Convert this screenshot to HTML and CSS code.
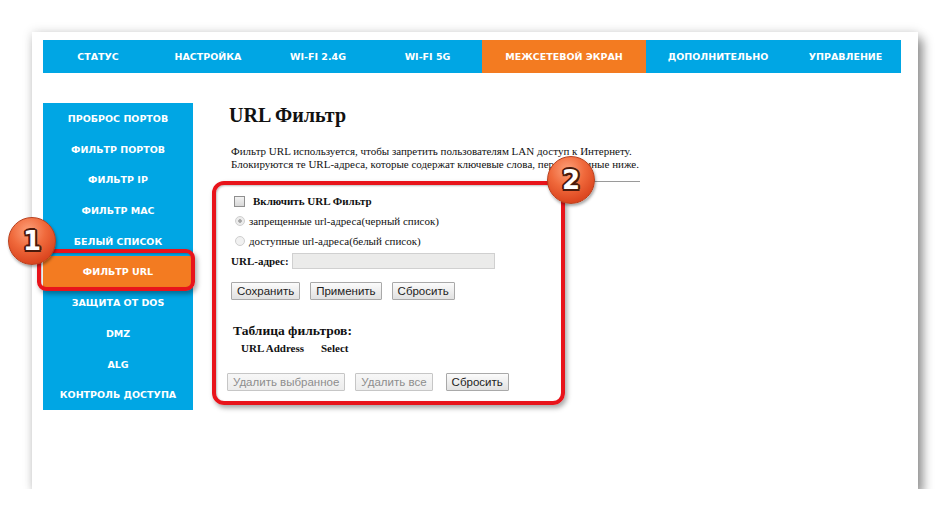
FILE: index.html
```html
<!DOCTYPE html>
<html lang="ru">
<head>
  <meta charset="UTF-8" />
  <title>URL Фильтр</title>
  <link rel="stylesheet" href="styles.css">
</head>
<body>
  <div class="page">
    <div class="panel">

      <nav class="topnav">
        <a href="#" class="tab-1">Статус</a>
        <a href="#" class="tab-2">Настройка</a>
        <a href="#" class="tab-3">Wi-Fi 2.4G</a>
        <a href="#" class="tab-4">Wi-Fi 5G</a>
        <a href="#" class="tab-5 active">Межсетевой экран</a>
        <a href="#" class="tab-6">Дополнительно</a>
        <a href="#" class="tab-7">Управление</a>
      </nav>

      <div class="main">
        <ul class="sidebar">
          <li><a href="#">Проброс портов</a></li>
          <li><a href="#">Фильтр портов</a></li>
          <li><a href="#">Фильтр IP</a></li>
          <li><a href="#">Фильтр MAC</a></li>
          <li><a href="#">Белый список</a></li>
          <li class="active">
            <a href="#">Фильтр URL</a>
            <!-- annotation -->
            <span class="mark"></span>
            <span class="badge badge-1">1</span>
          </li>
          <li><a href="#">Защита от DoS</a></li>
          <li><a href="#">DMZ</a></li>
          <li><a href="#">ALG</a></li>
          <li><a href="#">Контроль доступа</a></li>
        </ul>

        <section class="content">
          <h1>URL Фильтр</h1>
          <p class="intro">
            Фильтр URL используется, чтобы запретить пользователям LAN доступ к Интернету.<br>
            Блокируются те URL-адреса, которые содержат ключевые слова, перечисленные ниже.
          </p>
          <div class="rule"></div>

          <form class="filter-form">
            <span class="mark mark-form"></span>
            <span class="badge badge-2">2</span>

            <label class="row check-row">
              <input type="checkbox" class="box" />
              <b>Включить URL Фильтр</b>
            </label>
            <label class="row radio-row">
              <input type="radio" name="mode" class="dot" checked disabled />
              запрещенные url-адреса(черный список)
            </label>
            <label class="row radio-row">
              <input type="radio" name="mode" class="dot" disabled />
              доступные url-адреса(белый список)
            </label>
            <div class="row url-row">
              <b>URL-адрес:</b>
              <input type="text" class="url-input" disabled />
            </div>
            <div class="buttons">
              <button type="button">Сохранить</button>
              <button type="button">Применить</button>
              <button type="button">Сбросить</button>
            </div>

            <h3>Таблица фильтров:</h3>
            <table class="filters">
              <tr>
                <th class="col-url">URL Address</th>
                <th>Select</th>
              </tr>
            </table>

            <div class="buttons bottom">
              <button type="button" disabled>Удалить выбранное</button>
              <button type="button" disabled>Удалить все</button>
              <button type="button" class="reset">Сбросить</button>
            </div>
          </form>
        </section>
      </div>

    </div>
  </div>
</body>
</html>
```

FILE: styles.css
```css
/* Base */
body {
  margin: 0;
  background: #fff;
  font-family: 'Liberation Serif', 'Times New Roman', serif;
  color: #111;
}

.page {
  padding: 32px 0 0 32px;
}

.panel {
  width: 886px;
  height: 457px;
  box-sizing: border-box;
  padding: 8px 0 0 11px;
  background: #fff;
  box-shadow: 5px 7px 10px rgba(0, 0, 0, 0.4), 0 0 10px rgba(0, 0, 0, 0.15);
}

/* Top navigation */
.topnav {
  display: flex;
  width: 858px;
  height: 33px;
  background: #00a6e4;
}

.topnav a {
  display: block;
  text-align: center;
  line-height: 33px;
  color: #fff;
  text-decoration: none;
  text-transform: uppercase;
  font-family: 'DejaVu Sans', Verdana, sans-serif;
  font-weight: bold;
  font-size: 9.5px;
}

.topnav a.active {
  background: #f37b21;
}

.tab-1, .tab-2, .tab-3 { width: 110px; }
.tab-4 { width: 109px; }
.tab-5 { width: 164px; }
.tab-6 { width: 144px; }
.tab-7 { width: 111px; }

.main {
  display: flex;
  margin-top: 30px;
}

/* Sidebar */
.sidebar {
  list-style: none;
  margin: 0;
  padding: 0;
  width: 150px;
  background: #00a6e4;
  align-self: flex-start;
}

.sidebar li {
  position: relative;
  height: 30.7px;
}

.sidebar a {
  display: block;
  padding-top: 1px;
  line-height: 29.7px;
  text-align: center;
  color: #fff;
  text-decoration: none;
  text-transform: uppercase;
  font-family: 'DejaVu Sans', Verdana, sans-serif;
  font-weight: bold;
  font-size: 9.5px;
}

.sidebar li.active {
  background: #f37b21;
}

/* Annotations */
.mark {
  position: absolute;
  border: 4px solid #e8141b;
  border-radius: 9px;
  box-shadow: 2px 3px 5px rgba(0, 0, 0, 0.35), inset 1px 1px 2px rgba(0, 0, 0, 0.25);
  pointer-events: none;
}

.sidebar .mark {
  left: -6px;
  right: -2px;
  top: -7px;
  bottom: -4px;
}

.badge {
  position: absolute;
  width: 48px;
  height: 48px;
  border-radius: 50%;
  box-sizing: border-box;
  border: 1px solid #b8401e;
  background: radial-gradient(circle at 42% 28%, #fca07a 0%, #f06a3c 40%, #dc4720 75%, #c53a17 100%);
  box-shadow: 1px 2px 3px rgba(0, 0, 0, 0.35);
  color: #fff;
  text-align: center;
  line-height: 46px;
  font-family: 'DejaVu Sans', Verdana, sans-serif;
  font-weight: bold;
  font-size: 26px;
  text-shadow:
    -1.5px -1.5px 0 #4a1a0c, 1.5px -1.5px 0 #4a1a0c,
    -1.5px 1.5px 0 #4a1a0c, 1.5px 1.5px 0 #4a1a0c,
    0 -2px 0 #4a1a0c, 0 2px 0 #4a1a0c,
    -2px 0 0 #4a1a0c, 2px 0 0 #4a1a0c;
  z-index: 2;
}

.badge-1 {
  left: -35px;
  top: -39px;
}

.badge-2 {
  left: 316px;
  top: -26px;
}

/* Content */
.content {
  margin-left: 36px;
}

h1 {
  margin: -0.5px 0 0 0;
  font-size: 20px;
  line-height: 24px;
  font-weight: bold;
}

.intro {
  margin: 18px 0 0 2px;
  font-size: 11px;
  line-height: 13px;
  white-space: nowrap;
}

.rule {
  margin: 10.5px 0 0 2px;
  width: 409px;
  border-top: 1px solid #9a9a9a;
}

.filter-form {
  position: relative;
  margin: 0 0 0 2px;
  padding-top: 9px;
  font-size: 11px;
}

.mark-form {
  left: -19px;
  top: -1px;
  width: 345px;
  height: 216px;
  border-radius: 12px;
}

.row {
  display: flex;
  align-items: center;
  height: 20px;
}

.box {
  appearance: none;
  width: 11px;
  height: 11px;
  margin: 0 8px 0 3px;
  border: 1px solid #8f8f8f;
  background: linear-gradient(#f2f2f2, #d8d8d8);
  box-sizing: border-box;
}

.dot {
  appearance: none;
  width: 10px;
  height: 10px;
  margin: 0 4px 0 4px;
  border: 1px solid #cfcfcf;
  border-radius: 50%;
  background: #f1f1f1;
  box-sizing: border-box;
}

.dot:checked {
  background: radial-gradient(circle, #9c9c9c 0, #b0b0b0 28%, #ececec 38%);
}

.url-row b {
  margin-right: 3px;
}

.url-input {
  width: 203px;
  height: 16px;
  box-sizing: border-box;
  margin: 0;
  border: 1px solid #d0d0d0;
  background: #ebebea;
}

/* Buttons */
.buttons {
  display: flex;
  gap: 10px;
  margin-top: 11px;
}

.buttons button {
  height: 18px;
  padding: 0 5px;
  margin: 0;
  border: 1px solid #a9a9a9;
  border-radius: 1px;
  background: linear-gradient(#fbfbfb, #e1e1e1);
  color: #222;
  font-family: 'Liberation Sans', Arial, sans-serif;
  font-size: 11.5px;
  line-height: 16px;
}

.buttons button:disabled {
  color: #8d8d8d;
  border-color: #c6c6c6;
  background: linear-gradient(#f7f7f7, #ececec);
}

.buttons.bottom {
  margin: 18px 0 0 -4px;
}

.buttons.bottom .reset {
  margin-left: 3px;
}

h3 {
  margin: 23px 0 0 2px;
  font-size: 13.5px;
  line-height: 16px;
}

.filters {
  margin: 2px 0 0 10px;
  border-spacing: 0;
}

.filters th {
  padding: 0;
  text-align: left;
  font-size: 11px;
  line-height: 14px;
}

.filters .col-url {
  width: 80px;
}
```
